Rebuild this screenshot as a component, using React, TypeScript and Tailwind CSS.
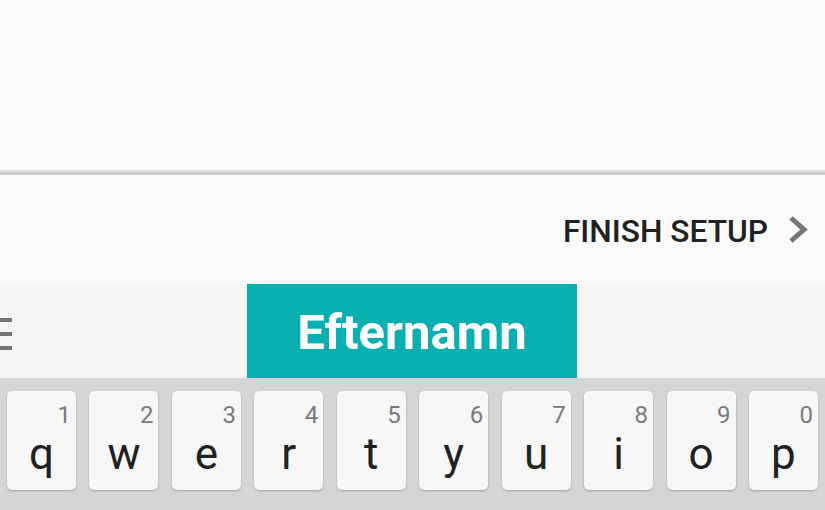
import React from "react";

const keys: [string, string][] = [
  ["q", "1"],
  ["w", "2"],
  ["e", "3"],
  ["r", "4"],
  ["t", "5"],
  ["y", "6"],
  ["u", "7"],
  ["i", "8"],
  ["o", "9"],
  ["p", "0"],
];

export default function App() {
  return (
    <div
      className="w-[825px] h-[510px] overflow-hidden flex flex-col bg-[#fafafa]"
      style={{ fontFamily: "Roboto, 'Noto Sans', sans-serif" }}
    >
      <div className="h-[170px] bg-[#fafafa]" />
      <div className="h-[5px] flex flex-col">
        <div className="h-[2px] bg-[#dedede]" />
        <div className="h-[3px] bg-[#cdcdcd]" />
      </div>
      <div className="h-[109px] flex items-start justify-end pt-[41px] pr-[15px]">
        <span className="text-[31.7px] leading-none font-medium text-[#212121]">
          FINISH SETUP
        </span>
        <svg width="24" height="32" viewBox="0 0 24 32" className="ml-[18px] mt-[-2px]">
          <path d="M5 4 L18 15.5 L5 27" fill="none" stroke="#757575" strokeWidth="5" />
        </svg>
      </div>
      <div className="h-[94px] bg-[#f5f5f5] flex">
        <div className="w-[247px] flex items-center">
          <div className="flex flex-col gap-[10px] mt-[6px]">
            <div className="w-[12px] h-[4px] bg-[#757575]" />
            <div className="w-[12px] h-[4px] bg-[#757575]" />
            <div className="w-[12px] h-[4px] bg-[#757575]" />
          </div>
        </div>
        <div className="w-[330px] bg-[#0aafaf] flex items-center justify-center">
          <span className="text-[49px] font-bold text-white leading-none mt-[2px]">Efternamn</span>
        </div>
      </div>
      <div className="flex-1 bg-[#d5d5d5] flex justify-between px-[7px] pt-[13px]">
        {keys.map(([l, n]) => (
          <div
            key={l}
            className="relative w-[69px] h-[99px] rounded-[5px] bg-[#f7f7f7] shadow-[0_1px_2px_rgba(0,0,0,0.25)] flex items-end justify-center pb-[14px]"
          >
            <span className="absolute top-[12px] right-[5px] text-[24px] leading-none text-[#7a7a7a]">
              {n}
            </span>
            <span className="text-[44px] leading-none text-[#212121]">{l}</span>
          </div>
        ))}
      </div>
    </div>
  );
}
